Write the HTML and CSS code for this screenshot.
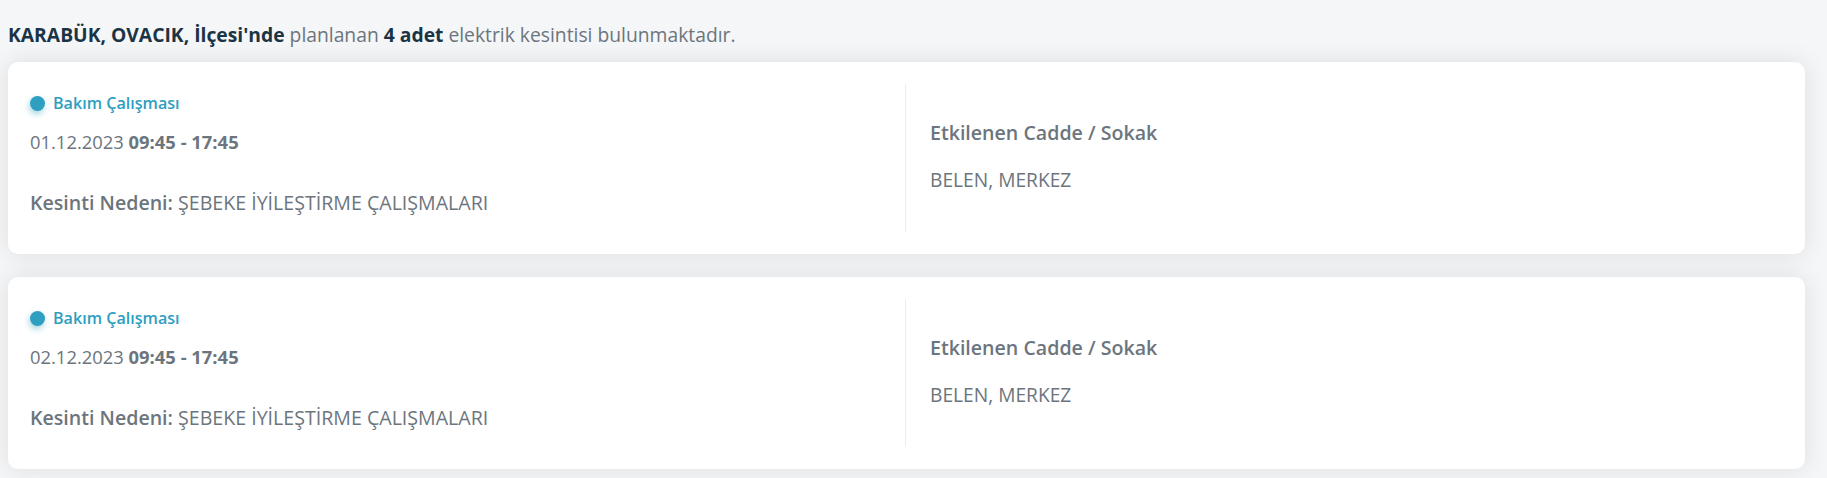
FILE: index.html
```html
<!DOCTYPE html>
<html lang="tr">
<head>
<meta charset="utf-8">
<title>Kesintiler</title>
<link rel="stylesheet" href="styles.css">
</head>
<body>
<main class="page">
  <p class="summary"><strong>KARABÜK, OVACIK, İlçesi'nde</strong> planlanan <strong>4 adet</strong> elektrik kesintisi bulunmaktadır.</p>

  <section class="card">
    <div class="col col-left">
      <div class="type"><span class="dot"></span><span class="type-text">Bakım Çalışması</span></div>
      <div class="date">01.12.2023 <b>09:45 - 17:45</b></div>
      <div class="reason"><b>Kesinti Nedeni:</b> ŞEBEKE İYİLEŞTİRME ÇALIŞMALARI</div>
    </div>
    <div class="col col-right">
      <div class="street-title">Etkilenen Cadde / Sokak</div>
      <div class="street">BELEN, MERKEZ</div>
    </div>
  </section>

  <section class="card">
    <div class="col col-left">
      <div class="type"><span class="dot"></span><span class="type-text">Bakım Çalışması</span></div>
      <div class="date">02.12.2023 <b>09:45 - 17:45</b></div>
      <div class="reason"><b>Kesinti Nedeni:</b> ŞEBEKE İYİLEŞTİRME ÇALIŞMALARI</div>
    </div>
    <div class="col col-right">
      <div class="street-title">Etkilenen Cadde / Sokak</div>
      <div class="street">BELEN, MERKEZ</div>
    </div>
  </section>
</main>
</body>
</html>
```
FILE: styles.css
```css
* { box-sizing: border-box; }
html, body { margin: 0; padding: 0; }
body {
  background: #f5f6f8;
  font-family: "Open Sans", "Noto Sans", sans-serif;
  color: #6c757d;
  overflow: hidden;
}
.page {
  padding: 23px 22px 0 8px;
}
.summary {
  margin: 0 0 15px 0;
  font-size: 19.3px;
  line-height: 24px;
  color: #6c757d;
}
.summary strong {
  color: #1b3445;
  font-weight: 700;
}
.card {
  display: flex;
  height: 192px;
  padding: 22px 0;
  background: #fff;
  border-radius: 10px;
  box-shadow: 0 0 24px rgba(0, 0, 0, 0.1);
  margin-bottom: 23px;
}
.col {
  flex: 1 1 0;
}
.col-left {
  padding: 9px 0 0 22px;
  display: flex;
  flex-direction: column;
}
.col-right {
  border-left: 1px solid #ececec;
  padding-left: 24px;
  display: flex;
  flex-direction: column;
  justify-content: center;
}
.type {
  display: flex;
  align-items: center;
  gap: 8px;
  height: 20px;
}
.dot {
  width: 15px;
  height: 15px;
  border-radius: 50%;
  background: #2e9ec1;
  box-shadow: -1px 3px 6px rgba(46, 158, 193, 0.45);
}
.type-text {
  font-size: 16.1px;
  font-weight: 600;
  color: #2e9ec1;
}
.date {
  margin-top: 17px;
  font-size: 18.4px;
  line-height: 24px;
}
.date b { font-weight: 700; }
.reason b { font-weight: 600; }
.reason {
  margin-top: 37px;
  font-size: 19.6px;
  line-height: 24px;
}
.street-title {
  font-size: 19.6px;
  line-height: 24px;
  font-weight: 600;
  margin-top: -3px;
}
.street {
  margin-top: 23px;
  font-size: 19.2px;
  line-height: 24px;
}
```
